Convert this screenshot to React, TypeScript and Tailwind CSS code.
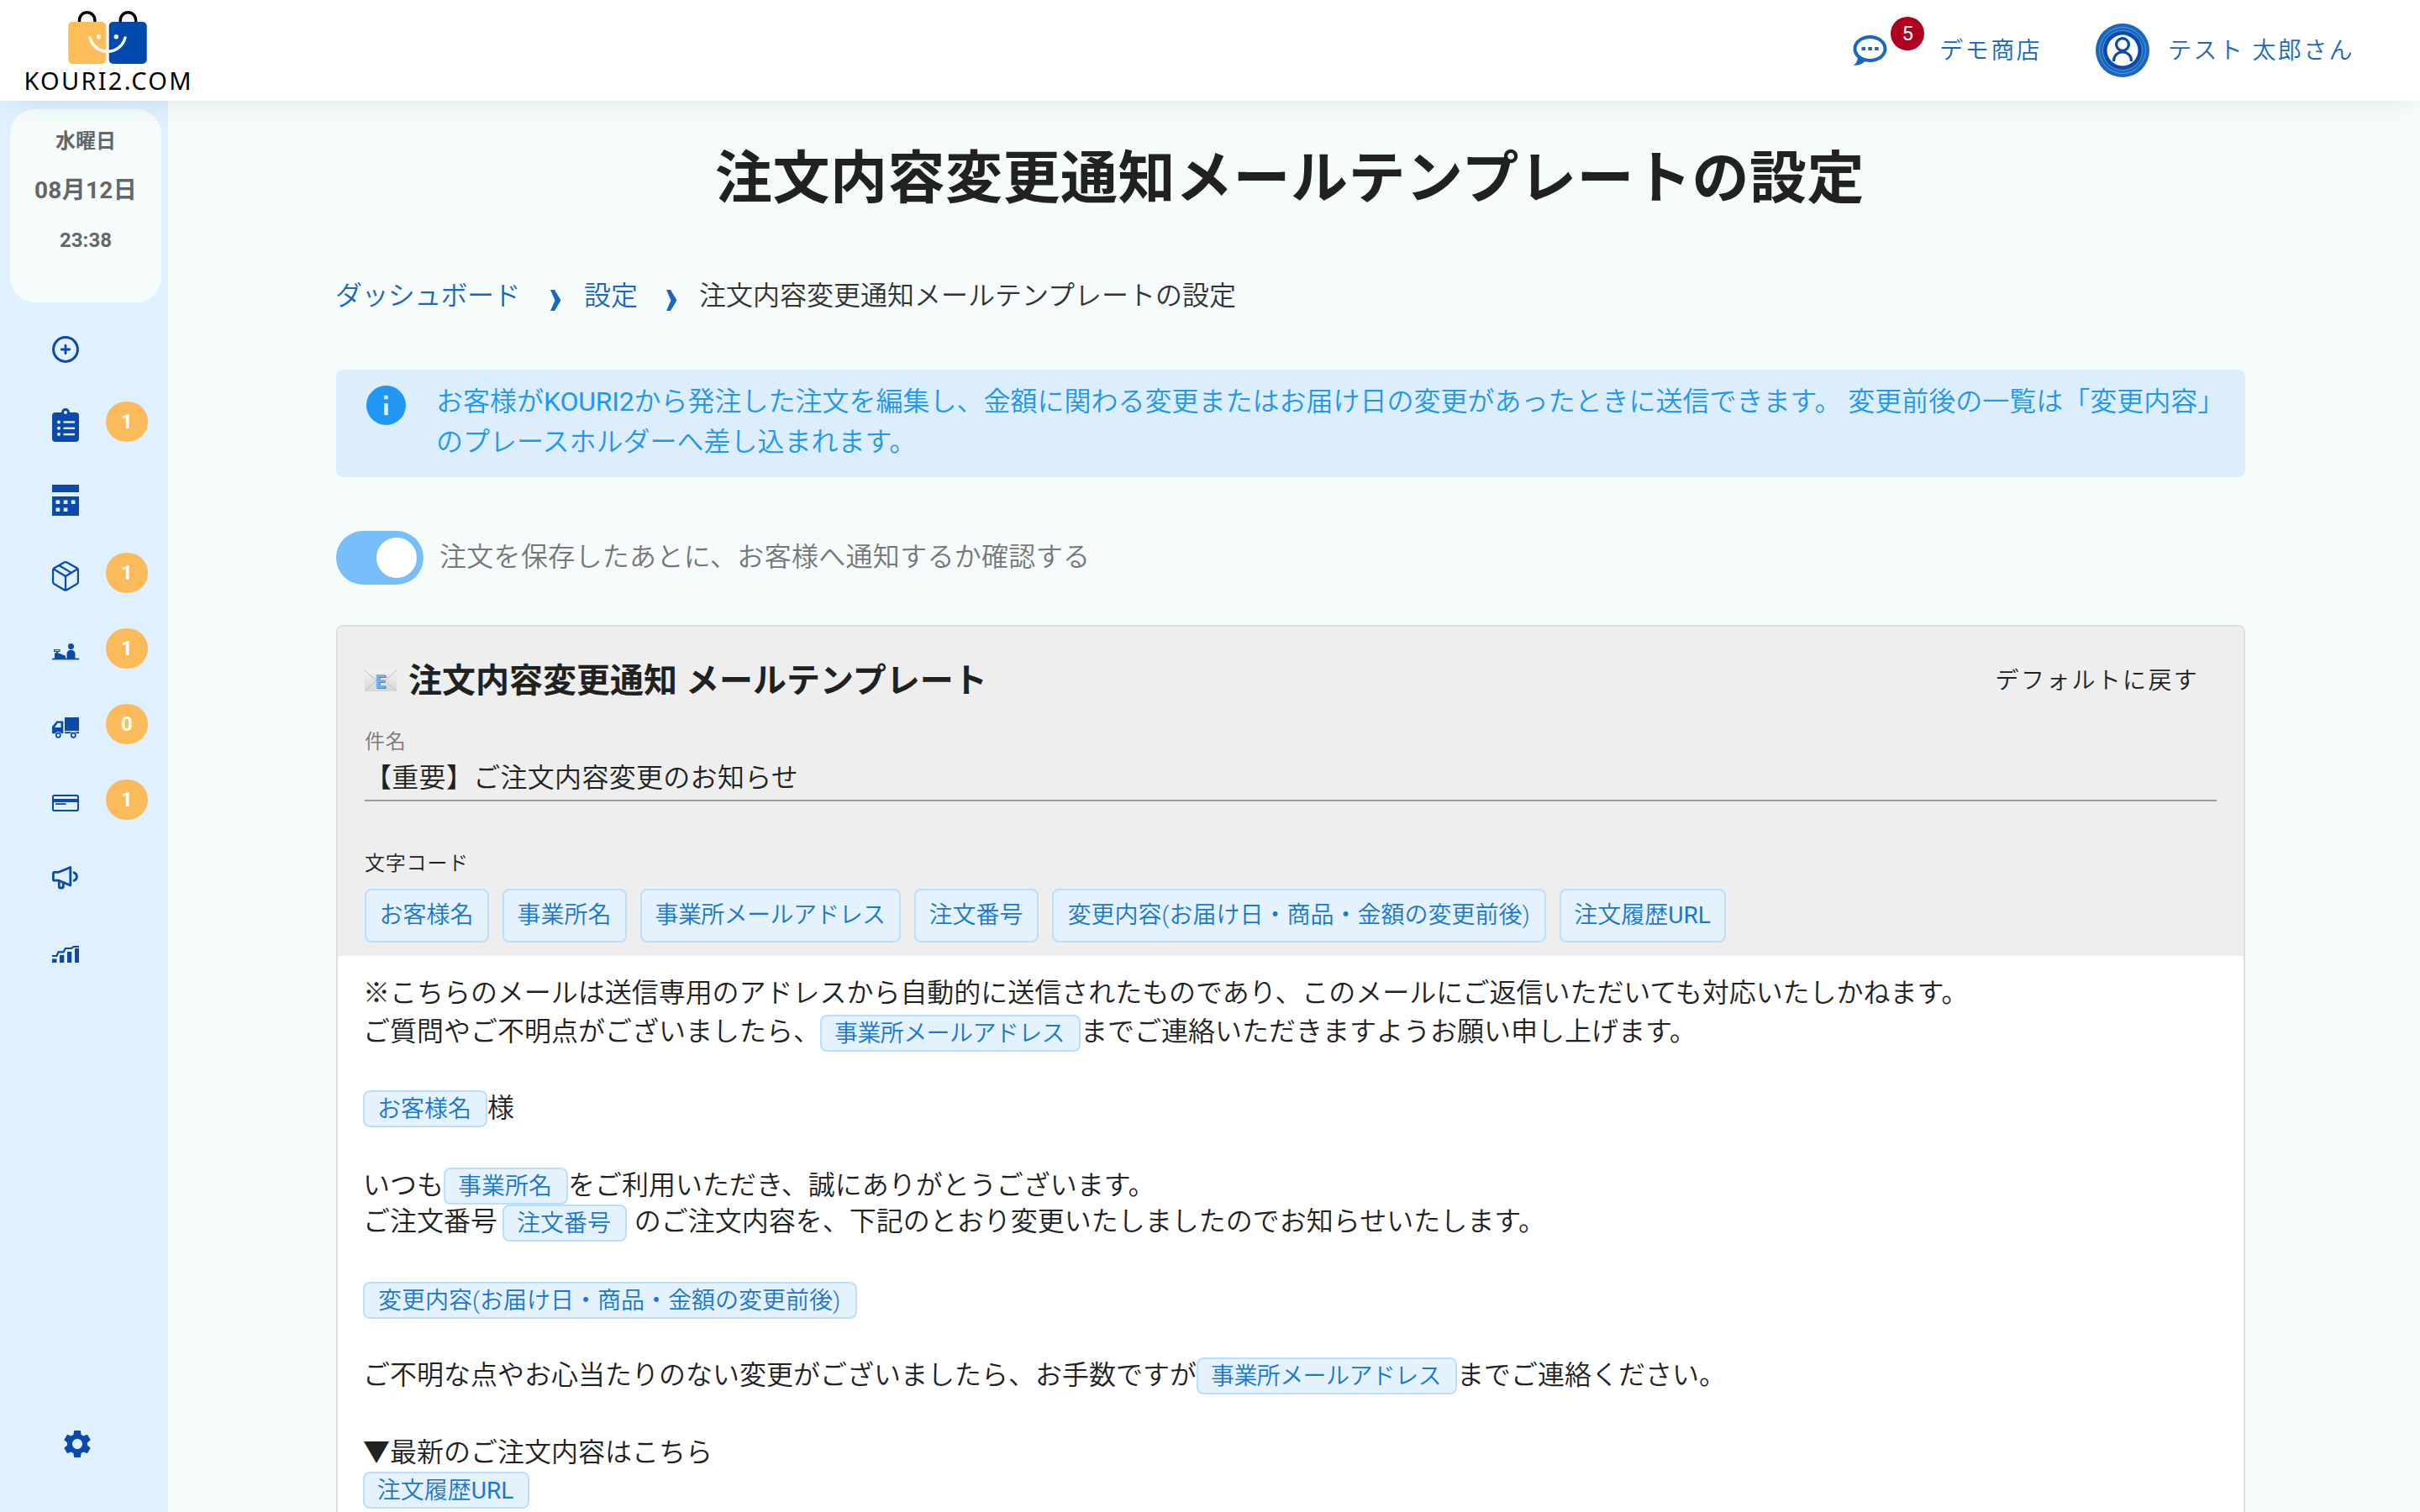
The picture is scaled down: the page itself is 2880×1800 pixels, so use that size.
import React from 'react';

const JP = "font-[Roboto,'Noto_Sans_CJK_JP',sans-serif]";

function Logo() {
  return (
    <svg width="230" height="120" viewBox="0 0 230 120">
      <g fill="none" stroke="#000" strokeWidth="3.4">
        <path d="M94.5 27v-3a9.2 9.2 0 0 1 18.4 0v3" />
        <path d="M143.2 27v-3a9.2 9.2 0 0 1 18.4 0v3" />
      </g>
      <rect x="81.300" y="26" width="45" height="50" rx="5" fill="#ffbd59" />
      <rect x="129.700" y="26" width="45" height="50" rx="5" fill="#004aad" />
      <path d="M107 45c3 10 11 16.300 21 16.300S146 55 149 45" fill="none" stroke="#fff" strokeWidth="3.400" strokeLinecap="round" />
      <circle cx="117.500" cy="43.700" r="2.700" fill="#fff" />
      <circle cx="138.300" cy="43.700" r="2.700" fill="#fff" />
      <text x="28.500" y="106.500" fontFamily="Noto Sans" fontSize="29" fontWeight="400" textLength="199" lengthAdjust="spacing" fill="#000">KOURI2.COM</text>
    </svg>
  );
}

function ChatIcon() {
  return (
    <svg width="42" height="38" viewBox="0 0 42 38">
      <path fillRule="evenodd" d="M20.500 0C31.500 0 40.500 7 40.500 16S31.500 32 20.500 32c-2.200 0-4.300-.3-6.200-.8C10.800 34.500 5.500 36 1 36c2.600-2.600 4.600-5.500 4.800-8.800C2.600 24.300.5 20.400.5 16 .5 7 9.500 0 20.500 0zm0 4C11.500 4 4.500 9.500 4.500 16s7 12 16 12 16-5.500 16-12-7-12-16-12z" fill="#1867c0" />
      <path d="M10.500 14h4.500v4h-4.500zM18.300 14h4.500v4h-4.500zM26.200 14h4.500v4h-4.500z" fill="#1867c0" />
    </svg>
  );
}

function Avatar() {
  return (
    <svg width="64" height="64" viewBox="0 0 64 64">
      <circle cx="32" cy="32" r="32" fill="#1867c0" />
      <circle cx="32" cy="32" r="27.500" fill="none" stroke="#6ea3dc" strokeWidth="0.800" />
      <circle cx="32" cy="32" r="23.500" fill="#0b49ad" stroke="#6ea3dc" strokeWidth="0.800" />
      <circle cx="32" cy="32" r="18.500" fill="#fff" />
      <g fill="none" stroke="#0b49ad" strokeWidth="3.200">
        <circle cx="32" cy="25" r="7.400" />
        <path d="M21.500 45c0-7 4.500-11 10.500-11s10.500 4 10.500 11" />
      </g>
    </svg>
  );
}

const BLUE = '#0b49ad';
const BG = '#dff0ff';

const PlusIcon = (
  <svg width="32" height="32" viewBox="0 0 32 32" fill="none" stroke={BLUE}>
    <circle cx="16" cy="16" r="14.400" strokeWidth="3" />
    <path d="M16 11.200v9.600M11.200 16h9.600" strokeWidth="2.800" strokeLinecap="round" />
  </svg>
);
const ClipboardIcon = (
  <svg width="32" height="40" viewBox="0 0 32 40">
    <path d="M4 5h7a5 5 0 0 1 10 0h7a4 4 0 0 1 4 4v27a4 4 0 0 1-4 4H4a4 4 0 0 1-4-4V9a4 4 0 0 1 4-4z" fill={BLUE} />
    <g fill={BG}>
      <circle cx="16" cy="5" r="2" />
      <circle cx="8" cy="16.500" r="2" />
      <circle cx="8" cy="23.800" r="2" />
      <circle cx="8" cy="31" r="2" />
      <rect x="13.500" y="15.300" width="13.500" height="2.400" />
      <rect x="13.500" y="22.600" width="13.500" height="2.400" />
      <rect x="13.500" y="29.900" width="13.500" height="2.400" />
    </g>
  </svg>
);
const CalendarIcon = (
  <svg className="-mt-0.5" width="32" height="37" viewBox="0 0 32 37">
    <path d="M0 0h32v9H0zM0 14h32v23H0z" fill={BLUE} />
    <path d="M4.500 18.500h4.700v4.500H4.500zM13.700 18.500h4.700v4.500h-4.700zM22.800 18.500h4.700v4.500h-4.700zM4.500 27.500h4.700v4.500H4.500zM13.700 27.500h4.700v4.500h-4.700z" fill={BG} />
  </svg>
);
const BoxIcon = (
  <svg width="32" height="36" viewBox="0 0 32 36" fill="none" stroke={BLUE} strokeWidth="2.200" strokeLinejoin="round">
    <path d="M14.500 1.500q1.500-.8 3 0l12 6.800q1.400.8 1.400 2.200v14.500q0 1.400-1.400 2.200l-12 7.100q-1.500.8-3 0l-12-7.100Q1.100 26.400 1.100 25V10.500q0-1.400 1.400-2.200z" />
    <path d="M1.500 9.200 16 18l14.500-8.800M16 18v17M8.500 5.200l14.500 8.700" />
  </svg>
);
const RegisterIcon = (
  <svg width="32" height="20" viewBox="0 0 32 20" fill={BLUE}>
    <path d="M0 17.600h32V19.400H0z" />
    <circle cx="22.500" cy="3.600" r="3.500" />
    <path d="M17.500 18.500V12.500a5 4.800 0 0 1 10 0V18.500z" />
    <path d="M3 18V11.300h4l9 3.500V18z" />
    <path fillRule="evenodd" d="M2 7h7.500v3H7v1.500H5V10H2zm1.300 1v1h4.900V8z" />
  </svg>
);
const TruckIcon = (
  <svg width="32" height="25" viewBox="0 0 32 25">
    <path d="M15 0h17v16H15z" fill={BLUE} />
    <path d="M15 17.200h17v2H15z" fill={BLUE} />
    <path d="M5.500 4.500H13.300V19.300H0V11z" fill={BLUE} />
    <path d="M6.600 6.800H10.500V12H3z" fill={BG} />
    <circle cx="7.300" cy="21.300" r="4.200" fill={BG} />
    <circle cx="25.300" cy="21.300" r="4.200" fill={BG} />
    <g fill="none" stroke={BLUE} strokeWidth="1.700">
      <circle cx="7.300" cy="21.300" r="2.600" />
      <circle cx="25.300" cy="21.300" r="2.600" />
    </g>
  </svg>
);
const CardIcon = (
  <svg width="32" height="20" viewBox="0 0 32 20" fill={BLUE}>
    <rect x="1" y="1" width="30" height="18" rx="1.800" fill="none" stroke={BLUE} strokeWidth="2" />
    <path d="M1 5h30v4H1zM4 10.200h12.500v1.800H4z" />
  </svg>
);
const MegaphoneIcon = (
  <svg className="-mt-0.5" width="32" height="28" viewBox="0 0 32 28" fill="none" stroke={BLUE} strokeWidth="2.800" strokeLinejoin="round" strokeLinecap="round">
    <path d="M1.400 8.800q0-1.500 1.500-1.500H8L21.800 1.500V23L8 17.200H2.900q-1.500 0-1.500-1.500z" />
    <path d="M8.300 17.500v7q0 1.500 1.500 1.500h2q1.500 0 1.500-1.500v-5M26 7.800c4.500 1.500 4.500 8 0 9.500" />
  </svg>
);
const ChartIcon = (
  <svg width="32" height="20" viewBox="0 0 32 20">
    <path d="M0 15.500h5.500V20H0zM9 11h5.300v9H9zM18 7h5.200v13H18zM27 3h5v17h-5z" fill={BLUE} />
    <path d="M0 12h5.500l2-4.700h6l2.500-4.300h7l2.500-2H32" fill="none" stroke={BLUE} strokeWidth="2.200" />
  </svg>
);

const NAV: { icon: React.ReactNode; badge?: number }[] = [
  { icon: PlusIcon },
  { icon: ClipboardIcon, badge: 1 },
  { icon: CalendarIcon },
  { icon: BoxIcon, badge: 1 },
  { icon: RegisterIcon, badge: 1 },
  { icon: TruckIcon, badge: 0 },
  { icon: CardIcon, badge: 1 },
  { icon: MegaphoneIcon },
  { icon: ChartIcon },
];

function Sidebar() {
  return (
    <aside className="flex w-[200px] shrink-0 flex-col bg-[#dff0ff]">
      <div className="ml-3 mt-2.5 flex h-[230px] w-[180px] flex-col items-center rounded-[30px] bg-[#f6fcfc] pt-5 font-bold text-[#666]">
        <span className="h-[59px] text-[24px] leading-[36px]">水曜日</span>
        <span className="h-[59px] text-[28px] leading-[36px] tracking-[0.3px]">08月12日</span>
        <span className="text-[24px] leading-[36px]">23:38</span>
      </div>
      <nav className="mt-[11px] flex flex-col">
        {NAV.map((item, i) => (
          <div key={i} className="flex h-[90px] items-center">
            <div className="ml-[62px] flex w-8 justify-center">{item.icon}</div>
            {item.badge !== undefined && (
              <span className="mb-2 ml-8 flex h-12 w-[50px] items-center justify-center rounded-[24px] bg-[#fcbb5b] text-[24px] font-bold text-white">
                {item.badge}
              </span>
            )}
          </div>
        ))}
      </nav>
      <div className="mb-[61px] ml-[72px] mt-auto">
        <svg width="40" height="40" viewBox="0 0 24 24" fill={BLUE}>
          <path d="M19.140 12.940c.04-.3.06-.61.06-.94 0-.32-.02-.64-.07-.94l2.030-1.580a.49.49 0 0 0 .12-.61l-1.920-3.320a.488.488 0 0 0-.59-.22l-2.390.96c-.5-.38-1.030-.7-1.620-.94l-.36-2.540a.484.484 0 0 0-.48-.41h-3.840c-.24 0-.43.17-.47.41l-.36 2.540c-.59.24-1.130.57-1.620.94l-2.390-.96c-.22-.08-.47 0-.59.22L2.740 8.870c-.12.21-.08.47.12.61l2.030 1.580c-.05.3-.09.63-.09.94s.02.64.07.94l-2.030 1.580a.49.49 0 0 0-.12.61l1.920 3.320c.12.22.37.29.59.22l2.390-.96c.5.38 1.030.7 1.620.94l.36 2.540c.05.24.24.41.48.41h3.840c.24 0 .44-.17.47-.41l.36-2.540c.59-.24 1.130-.56 1.620-.94l2.390.96c.22.08.47 0 .59-.22l1.920-3.320c.12-.22.07-.47-.12-.61l-2.010-1.580zM12 15.600c-1.980 0-3.600-1.620-3.600-3.600s1.620-3.600 3.600-3.600 3.600 1.620 3.600 3.600-1.620 3.600-3.600 3.600z" />
        </svg>
      </div>
    </aside>
  );
}

function Chevron() {
  return (
    <svg width="13" height="26" viewBox="0 0 13 26">
      <path d="M0 0h5l7.500 12.500L5 25H0l5.500-12.500z" fill="#1867c0" />
    </svg>
  );
}

function MailIcon() {
  return (
    <svg width="38" height="25" viewBox="0 0 38 25">
      <defs>
        <linearGradient id="env" x1="0" y1="0" x2="0" y2="1">
          <stop offset="0" stopColor="#f2f2f2" />
          <stop offset="1" stopColor="#d6d6d6" />
        </linearGradient>
      </defs>
      <rect width="38" height="25" rx="1" fill="url(#env)" />
      <path d="M0 0l15 13q4 3.500 8 0L38 0M0 25l14-13M38 25L24 12" fill="none" stroke="#bdbdbd" strokeWidth="1" />
      <text x="13.600" y="21.800" fontFamily="Roboto" fontWeight="900" fontSize="22" fill="#7c7c7c">E</text>
      <text x="12.500" y="20.500" fontFamily="Roboto" fontWeight="900" fontSize="22" fill="#6cb1fa">E</text>
    </svg>
  );
}

const CHIPS = [
  { label: 'お客様名', width: 'w-[148px]' },
  { label: '事業所名', width: 'w-[148px]' },
  { label: '事業所メールアドレス', width: 'w-[310px] tracking-[-0.6px]' },
  { label: '注文番号', width: 'w-[148px]' },
  { label: '変更内容(お届け日・商品・金額の変更前後)', width: 'w-[588px]' },
  { label: '注文履歴', latin: 'URL', width: 'w-[198px]' },
];

function Token({ i, className = '' }: { i: number; className?: string }) {
  const chip = CHIPS[i];
  return (
    <span
      className={`flex h-11 shrink-0 items-center justify-center whitespace-nowrap rounded-lg border-2 border-[#bbdefb] bg-[#e3f2fd] pr-0.5 pt-0.5 text-[28px] leading-none text-[#1976d2] ${chip.width} ${className}`}
    >
      {chip.label}
      {chip.latin && <span className="font-normal">{chip.latin}</span>}
    </span>
  );
}

function MailBody() {
  return (
    <div className="flex-1 whitespace-pre bg-white pl-[30px] pt-[22px] text-[32px] leading-[44px] text-[#212121]">
      <div className="flex h-[46px] tracking-[-0.03px]">※こちらのメールは送信専用のアドレスから自動的に送信されたものであり、このメールにご返信いただいても対応いたしかねます。</div>
      <div className="flex h-[46px]">
        <span>ご質問やご不明点がございましたら、</span>
        <Token i={2} className="mt-0.5" />
        <span>までご連絡いただきますようお願い申し上げます。</span>
      </div>
      <div className="h-[46px]" />
      <div className="flex h-[44px]">
        <Token i={0} />
        <span className="-mt-px">様</span>
      </div>
      <div className="h-[48px]" />
      <div className="flex h-[44px]">
        <span className="-mt-px">いつも</span>
        <Token i={1} />
        <span className="-mt-px">をご利用いただき、誠にありがとうございます。</span>
      </div>
      <div className="flex h-[44px]">
        <span className="-mt-0.5 w-[166px]">ご注文番号 </span>
        <Token i={3} />
        <span className="-mt-0.5 ml-px"> のご注文内容を、下記のとおり変更いたしましたのでお知らせいたします。</span>
      </div>
      <div className="h-[48px]" />
      <div className="flex h-[44px]">
        <Token i={4} />
      </div>
      <div className="h-[46px]" />
      <div className="flex h-[44px]">
        <span className="-mt-px">ご不明な点やお心当たりのない変更がございましたら、お手数ですが</span>
        <Token i={2} />
        <span className="-mt-px">までご連絡ください。</span>
      </div>
      <div className="h-[47px]" />
      <div className="flex h-[45px]">▼最新のご注文内容はこちら</div>
      <div className="flex h-[44px]">
        <Token i={5} />
      </div>
    </div>
  );
}

export default function App() {
  return (
    <div className={`flex h-[1800px] w-[2880px] flex-col overflow-hidden bg-[#f6fcfc] font-[350] ${JP}`}>
      <header className="relative z-10 flex h-[120px] shrink-0 items-center bg-white shadow-[0_16px_32px_-12px_rgba(0,0,0,0.08)]">
        <Logo />
        <div className="ml-auto flex h-full items-center pr-[78px] text-[28px] tracking-[2.4px] text-[#1867c0]">
          <div className="relative mr-[61px] h-[36px] w-[42px]">
            <ChatIcon />
            <span className="absolute left-[45px] top-[-22px] flex h-10 w-10 items-center justify-center rounded-full bg-[#b00020] text-[24px] font-normal tracking-normal text-white">5</span>
          </div>
          <span className="mr-[64px] pt-px">デモ商店</span>
          <Avatar />
          <span className="ml-[22px] pt-px">テスト 太郎さん</span>
        </div>
      </header>
      <div className="flex min-h-0 flex-1">
        <Sidebar />
        <main className="ml-[200px] flex w-[2272px] flex-col">
          <h1 className="mt-[59px] pr-0.5 text-center text-[68px] font-bold leading-[68px] tracking-[0.5px] text-[#212121]">
            注文内容変更通知メールテンプレートの設定
          </h1>
          <div className="mt-[81px] flex h-12 items-center text-[32px] text-[#1867c0]">
            <span className="-ml-px w-[256px] tracking-[-0.6px]">ダッシュボード</span>
            <span className="w-[40px] pt-3"><Chevron /></span>
            <span className="w-[98px]">設定</span>
            <span className="w-[39px] pt-3"><Chevron /></span>
            <span className="text-[#333]">注文内容変更通知メールテンプレートの設定</span>
          </div>
          <div className="mt-[64px] flex h-[128px] rounded-lg bg-[#dcedfc] px-9 pt-[14px] text-[32px] leading-[48px] text-[#2196f3]">
            <svg className="mt-[5px] shrink-0" width="47" height="47" viewBox="0 0 47 47">
              <circle cx="23.500" cy="23.500" r="23.500" fill="#2196f3" />
              <path d="M21.200 11.700h4.600v4.600h-4.600zM21.200 21.200h4.600v14h-4.600z" fill="#dcedfc" />
            </svg>
            <p className="ml-9 whitespace-nowrap">
              お客様が<span className="font-normal tracking-[-0.2px]">KOURI2</span>から発注した注文を編集し、金額に関わる変更またはお届け日の変更があったときに送信できます。 変更前後の一覧は「変更内容」
              <br />
              のプレースホルダーへ差し込まれます。
            </p>
          </div>
          <div className="mt-16 flex h-16 items-center">
            <div className="flex h-16 w-[104px] items-center justify-end rounded-full bg-[#77bffa] pr-2">
              <div className="h-12 w-12 rounded-full bg-white" />
            </div>
            <span className="-mt-[3px] ml-[19px] text-[32px] tracking-[0.3px] text-[#777]">注文を保存したあとに、お客様へ通知するか確認する</span>
          </div>
          <section className="mt-12 flex min-h-0 flex-1 flex-col rounded-t-lg border-2 border-b-0 border-[#dddfdf] bg-white">
            <div className="h-[392px] shrink-0 rounded-t-md bg-[#eee] px-8 text-[#212121]">
              <div className="flex h-[128px] items-center">
                <MailIcon />
                <h2 className="ml-3.5 pt-px text-[40px] font-bold">注文内容変更通知 メールテンプレート</h2>
                <span className="ml-auto mr-[21px] pt-px text-[28px] tracking-[2.3px]">デフォルトに戻す</span>
              </div>
              <div className="flex h-[80px] flex-col border-b-2 border-[#9e9e9e]">
                <div className="-mt-[9px] text-[24px] leading-[36px] tracking-[0.8px] text-[#777]">件名</div>
                <div className="mt-[1px] text-[32px] leading-[48px] tracking-[0.3px]">【重要】ご注文内容変更のお知らせ</div>
              </div>
              <div className="mt-[56px] text-[24px] leading-[36px] tracking-[0.8px]">文字コード</div>
              <div className="mt-3 flex gap-4">
                {CHIPS.map((c) => (
                  <button
                    key={c.label}
                    className={`flex h-16 items-center justify-center whitespace-nowrap rounded-lg border-2 border-[#bbdefb] bg-[#e3f2fd] pr-px text-[28px] text-[#1976d2] ${c.width}`}
                  >
                    {c.label}
                    {c.latin && <span className="font-normal">{c.latin}</span>}
                  </button>
                ))}
              </div>
            </div>
            <MailBody />
          </section>
        </main>
      </div>
    </div>
  );
}
